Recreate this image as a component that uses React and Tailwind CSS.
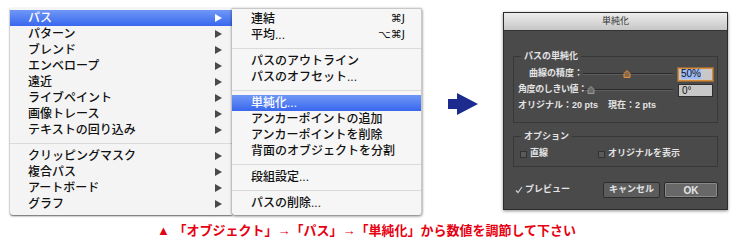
const font = "font-['Liberation_Sans','Noto_Sans_CJK_JP',sans-serif]";

const mainItems = [
  { label: "パス", sub: true, active: true },
  { label: "パターン", sub: true },
  { label: "ブレンド", sub: true },
  { label: "エンベロープ", sub: true },
  { label: "遠近", sub: true },
  { label: "ライブペイント", sub: true },
  { label: "画像トレース", sub: true },
  { label: "テキストの回り込み", sub: true },
  { sep: true },
  { label: "クリッピングマスク", sub: true },
  { label: "複合パス", sub: true },
  { label: "アートボード", sub: true },
  { label: "グラフ", sub: true },
];

const pathItems = [
  { label: "連結", key: "⌘J" },
  { label: "平均...", key: "⌥⌘J" },
  { sep: true },
  { label: "パスのアウトライン" },
  { label: "パスのオフセット..." },
  { sep: true },
  { label: "単純化...", active: true },
  { label: "アンカーポイントの追加" },
  { label: "アンカーポイントを削除" },
  { label: "背面のオブジェクトを分割" },
  { sep: true },
  { label: "段組設定..." },
  { sep: true },
  { label: "パスの削除..." },
];

function SubArrow({ white }) {
  return (
    <svg width="7" height="8" viewBox="0 0 7 8">
      <path d="M0 0L7 4L0 8Z" fill={white ? "#ffffff" : "#4a4a4a"} />
    </svg>
  );
}

function MenuRow({ item, pl, pr }) {
  if (item.sep) {
    return (
      <div className="h-[10px] flex items-center">
        <div className="h-px w-full bg-[#dadada]" />
      </div>
    );
  }
  const active = item.active;
  return (
    <div
      className={`h-[16px] flex items-center justify-between ${pl} ${pr} ${
        active ? "bg-linear-to-b from-[#7097f6] to-[#3966ee] text-white" : "text-[#111]"
      }`}
    >
      <span>{item.label}</span>
      {item.sub && <SubArrow white={active} />}
      {item.key && <span className="font-['DejaVu_Sans',sans-serif] text-[11px]">{item.key}</span>}
    </div>
  );
}

function Slider({ width, thumb, active }) {
  return (
    <div className={`relative h-[8px] shrink-0 ${width} flex items-center`}>
      <div className="h-[2px] w-full border-t border-[#2a2a2a] border-b border-b-[#5e5e5e]" />
      <svg
        className="absolute top-0"
        style={{ left: thumb }}
        width="8"
        height="8"
        viewBox="0 0 8 8"
      >
        <path
          d="M1 7.5V3.5L4 0.5L7 3.5V7.5Z"
          fill={active ? "#8a6a4a" : "#6a6a6a"}
          stroke={active ? "#e0903a" : "#9a9a9a"}
          strokeWidth="1"
        />
      </svg>
    </div>
  );
}

function Checkbox() {
  return <div className="w-[7px] h-[7px] bg-[#5a5a5a] border border-[#333]" />;
}

function Dialog() {
  return (
    <div className="mt-[4px] ml-[25px] w-[225px] h-[198px] flex flex-col bg-[#4a4a4a] border border-[#2c2c2c] shadow-[0_1px_3px_rgba(0,0,0,0.45)] text-[#e4e4e4] text-[9px] font-bold">
      <div className="h-[18px] shrink-0 flex items-center justify-center bg-linear-to-b from-[#ededed] to-[#c6c6c6] border-b border-[#333] text-[#333] font-normal">
        単純化
      </div>

      <div className="px-[9px] flex flex-col">
        <fieldset className="mt-[18px] border border-[#383838] px-[4px] pt-[3px] pb-[8px]">
          <legend className="ml-[3px] px-[3px] leading-[14px]">パスの単純化</legend>
          <div className="h-[16px] flex items-center">
            <span className="w-[65px] shrink-0 text-right whitespace-nowrap">曲線の精度：</span>
            <Slider width="w-[90px]" thumb={40} active />
            <div className="ml-[5px] w-[35px] h-[13px] flex items-center pl-[2px] bg-[#c8c8c8] border border-[#d88b35] shadow-[0_0_0_1px_rgba(216,139,53,0.5)] text-[10px] font-normal text-[#111]">
              <span className="bg-[#9cbaf7] leading-[10px]">50%</span>
            </div>
          </div>
          <div className="h-[16px] flex items-center">
            <span className="w-[66px] shrink-0 whitespace-nowrap tracking-[-0.4px]">角度のしきい値：</span>
            <Slider width="w-[89px]" thumb={3} />
            <div className="ml-[5px] w-[35px] h-[13px] flex items-center pl-[3px] bg-[#c8c8c8] border border-[#2e2e2e] text-[10px] font-normal text-[#111]">
              0°
            </div>
          </div>
          <div className="h-[16px] flex items-center">
            <span>オリジナル：20 pts</span>
            <span className="ml-[10px]">現在：2 pts</span>
          </div>
        </fieldset>

        <fieldset className="mt-[6px] border border-[#383838] px-[6px] pt-[3px] pb-[4px]">
          <legend className="ml-[1px] px-[3px] leading-[14px]">オプション</legend>
          <div className="h-[16px] flex items-center">
            <Checkbox />
            <span className="ml-[3px]">直線</span>
            <div className="ml-[50px] flex items-center">
              <Checkbox />
              <span className="ml-[3px]">オリジナルを表示</span>
            </div>
          </div>
        </fieldset>

        <div className="mt-[15px] h-[16px] flex items-center">
          <svg className="ml-[2px]" width="8" height="8" viewBox="0 0 8 8">
            <path d="M1 4.5L3 6.5L7 1" fill="none" stroke="#cfcfcf" strokeWidth="1.2" />
          </svg>
          <span className="ml-[2px]">プレビュー</span>
          <div className="ml-auto flex gap-[4px]">
            <div className="w-[57px] h-[16px] flex items-center justify-center bg-[#5c5c5c] border border-[#2e2e2e] rounded-[2px]">
              キャンセル
            </div>
            <div className="w-[54px] h-[16px] flex items-center justify-center bg-[#686868] border border-[#2a2a2a] shadow-[inset_0_0_0_1px_#8a8a8a] rounded-[2px] text-[10px]">
              OK
            </div>
          </div>
        </div>
      </div>
    </div>
  );
}

export default function App() {
  return (
    <div className={`w-[750px] h-[250px] bg-white flex flex-col ${font}`}>
      <div className="flex items-start pt-[8px] pl-[10px]">
        {/* Object menu */}
        <div className="w-[222px] pt-[2px] pb-[3px] bg-[#f4f4f4] shadow-[0_1px_2px_rgba(0,0,0,0.65)] rounded-bl-[3px] text-[12px] font-medium">
          {mainItems.map((item, i) => (
            <MenuRow key={i} item={item} pl="pl-[18px]" pr="pr-[10px]" />
          ))}
        </div>

        {/* Path submenu */}
        <div className="w-[190px] pt-[2px] pb-[4px] bg-[#f6f6f6] border-t border-r border-[#c8c8c8] shadow-[0_1px_3px_rgba(0,0,0,0.6)] rounded-b-[3px] rounded-tr-[2px] text-[12px] font-medium">
          {pathItems.map((item, i) => (
            <MenuRow key={i} item={item} pl="pl-[19px]" pr="pr-[16px]" />
          ))}
        </div>

        {/* arrow */}
        <svg className="mt-[85px] ml-[26px]" width="30" height="22" viewBox="0 0 30 22">
          <path d="M0 6H9V0L30 11L9 22V16H0Z" fill="#1b2b8e" />
        </svg>

        <Dialog />
      </div>

      <div className="mt-[7px] pl-[157px] text-[13px] leading-[18px] font-bold text-[#e60012]">
        ▲ 「オブジェクト」→「パス」→「単純化」から数値を調節して下さい
      </div>
    </div>
  );
}
